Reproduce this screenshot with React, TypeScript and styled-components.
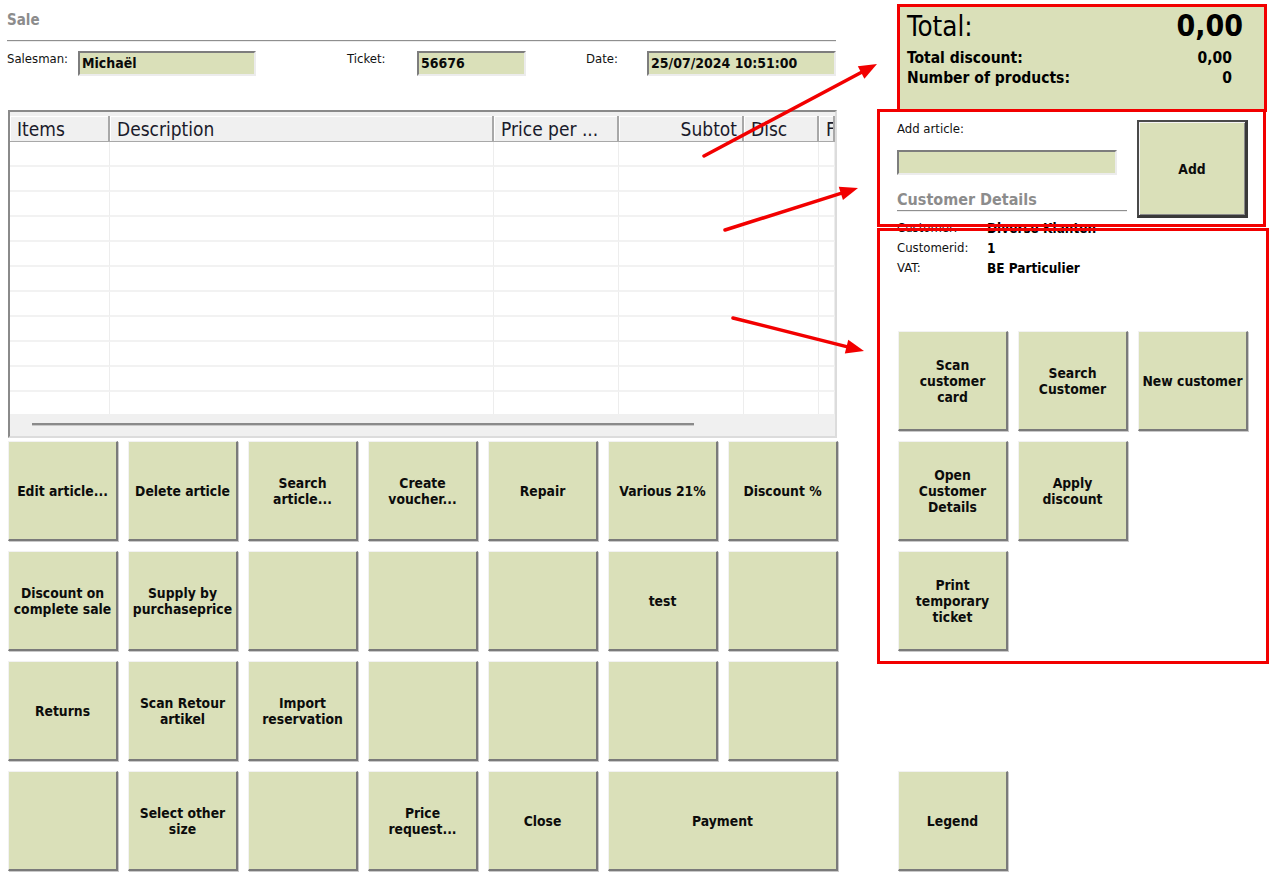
import React from "react";
import styled, { createGlobalStyle, css } from "styled-components";

const GREEN = "#dae0b9";
const FONT = `"DejaVu Sans Condensed", "DejaVu Sans", Tahoma, sans-serif`;
const RED = "#f20000";

const GlobalStyle = createGlobalStyle`
  html, body {
    margin: 0;
    padding: 0;
    background: #fff;
  }
  body {
    font-family: ${FONT};
    color: #000;
  }
`;

const Page = styled.div`
  position: relative;
  width: 1272px;
  height: 885px;
  overflow: hidden;
  display: flex;
  gap: 59px;
`;

/* ---------- left side ---------- */

const LeftColumn = styled.div`
  width: 831px;
  padding-left: 7px;
  display: flex;
  flex-direction: column;
`;

const Title = styled.div`
  padding-top: 12px;
  font-size: 15px;
  font-weight: bold;
  line-height: 17px;
  color: #8c8c8c;
`;

const Rule = styled.div<{ $width: number; $top: number }>`
  margin-top: ${(p) => p.$top}px;
  width: ${(p) => p.$width}px;
  height: 1px;
  background: #8f8f8f;
  border-bottom: 1px solid #ececec;
`;

const FieldRow = styled.div`
  margin-top: 9px;
  display: flex;
  height: 25px;
`;

const Field = styled.div<{ $offset: number }>`
  display: flex;
  margin-left: ${(p) => p.$offset}px;
`;

const FieldLabel = styled.span<{ $width: number }>`
  width: ${(p) => p.$width}px;
  font-size: 13px;
  line-height: 15px;
  color: #111;
`;

const Input = styled.div<{ $width: number }>`
  width: ${(p) => p.$width}px;
  height: 25px;
  box-sizing: border-box;
  background: ${GREEN};
  border: 2px solid;
  border-color: #7d7d7d #ececec #ececec #7d7d7d;
  font-size: 14px;
  font-weight: bold;
  line-height: 21px;
  padding-left: 2px;
  color: #0a0a0a;
`;

const COLS = "100px 384px 125px 125px 75px 16px";

const Table = styled.div`
  margin-top: 34px;
  margin-left: 1px;
  width: 829px;
  height: 328px;
  box-sizing: border-box;
  border: 2px solid;
  border-color: #8a8a8a #dcdcdc #dcdcdc #8a8a8a;
  background: #f0f0f0;
  padding-top: 4px;
  display: flex;
  flex-direction: column;
`;

const HeaderRow = styled.div`
  display: grid;
  grid-template-columns: ${COLS};
  height: 26px;
  overflow: hidden;
`;

const HeaderCell = styled.div<{ $right?: boolean }>`
  box-sizing: border-box;
  background: #f0f0f0;
  border-right: 2px solid #a8a8a8;
  border-bottom: 1px solid #a8a8a8;
  box-shadow: inset 1px 1px 0 #fff;
  font-size: 19px;
  line-height: 27px;
  padding: 0 5px 0 7px;
  text-align: ${(p) => (p.$right ? "right" : "left")};
  white-space: nowrap;
  overflow: hidden;
  color: #1a1a2a;
`;

const TableBody = styled.div`
  height: 272px;
  background: #fff;
  overflow: hidden;
`;

const BodyRow = styled.div`
  display: grid;
  grid-template-columns: ${COLS};
  height: 25px;
`;

const BodyCell = styled.div`
  border-right: 1px solid #ededed;
  border-bottom: 2px solid #f2f2f2;
`;

const ScrollTrack = styled.div`
  flex: 1;
  background: #f0f0f0;
  padding: 9px 0 0 22px;
`;

const ScrollThumb = styled.div`
  width: 662px;
  height: 2px;
  background: #8a8a8a;
  border-bottom: 1px solid #c8c8c8;
`;

const ButtonGrid = styled.div<{ $cols: number; $rows?: number }>`
  display: grid;
  grid-template-columns: repeat(${(p) => p.$cols}, 110px);
  grid-auto-rows: 100px;
  ${(p) =>
    p.$rows &&
    css`
      grid-template-rows: repeat(${p.$rows}, 100px);
    `}
  gap: 10px;
`;

const MainButtons = styled(ButtonGrid)`
  margin-top: 3px;
  margin-left: 1px;
`;

const PosButton = styled.button<{ $span?: number; $row?: number; $default?: boolean }>`
  box-sizing: border-box;
  margin: 0;
  padding: 0 2px;
  background: ${GREEN};
  border-style: solid;
  border-width: 1px 2px 2px 1px;
  border-color: #f2f2f2 #7a7a7a #7a7a7a #f2f2f2;
  box-shadow: 1px 1px 0 #c9c9c9;
  font-family: ${FONT};
  font-size: 13.8px;
  font-weight: bold;
  line-height: 16px;
  color: #0c0c0c;
  text-align: center;
  ${(p) =>
    p.$span &&
    css`
      grid-column: span ${p.$span};
    `}
  ${(p) =>
    p.$row &&
    css`
      grid-row: ${p.$row};
      grid-column: 1;
    `}
  ${(p) =>
    p.$default &&
    css`
      border-width: 2px 3px 3px 2px;
      border-color: #4a4a4a #3a3a3a #3a3a3a #4a4a4a;
      box-shadow: inset 1px 1px 0 #f4f4f4, inset -1px -1px 0 #8a8a8a;
    `}
`;

/* ---------- right side ---------- */

const RightColumn = styled.div`
  width: 372px;
  display: flex;
  flex-direction: column;
`;

const TotalPanel = styled.div`
  margin-top: 4px;
  width: 369px;
  height: 107px;
  box-sizing: border-box;
  background: ${GREEN};
  padding: 7px 0 0 10px;
`;

const TotalRow = styled.div`
  display: flex;
  justify-content: space-between;
  align-items: baseline;
  padding-right: 23px;
  height: 29px;
`;

const TotalLabel = styled.span`
  font-size: 27.5px;
  line-height: 29px;
`;

const TotalValue = styled.span`
  font-size: 30px;
  font-weight: bold;
  line-height: 29px;
`;

const SummaryRow = styled.div<{ $first?: boolean }>`
  display: flex;
  justify-content: space-between;
  padding-right: 34px;
  margin-top: ${(p) => (p.$first ? 8 : 0)}px;
  font-size: 15.5px;
  font-weight: bold;
  line-height: 20px;
`;

const AddSection = styled.div`
  margin-top: 9px;
  display: grid;
  grid-template-columns: 230px 111px;
  column-gap: 10px;
  height: 98px;
`;

const AddForm = styled.div`
  display: flex;
  flex-direction: column;
`;

const SmallLabel = styled.div`
  font-size: 13px;
  line-height: 15px;
  padding-top: 1px;
  color: #111;
`;

const AddInput = styled(Input)`
  margin-top: 14px;
`;

const SectionTitle = styled.div`
  margin-top: 15px;
  font-size: 16px;
  font-weight: bold;
  line-height: 19px;
  color: #8c8c8c;
`;

const InfoList = styled.div`
  display: flex;
  flex-direction: column;
`;

const InfoRow = styled.div`
  display: flex;
  font-size: 13px;
  line-height: 20px;
`;

const InfoLabel = styled.span`
  width: 90px;
  color: #111;
`;

const InfoValue = styled.span`
  font-weight: bold;
  font-size: 13.5px;
`;

const CustomerButtons = styled(ButtonGrid)`
  margin-top: 53px;
  margin-left: 1px;
`;

/* ---------- annotation overlay ---------- */

const Annotation = styled.div<{ $x: number; $y: number; $w: number; $h: number }>`
  position: absolute;
  left: ${(p) => p.$x}px;
  top: ${(p) => p.$y}px;
  width: ${(p) => p.$w}px;
  height: ${(p) => p.$h}px;
  box-sizing: border-box;
  border: 3px solid ${RED};
  pointer-events: none;
`;

const ArrowLayer = styled.svg`
  position: absolute;
  left: 0;
  top: 0;
  pointer-events: none;
`;

type Pt = [number, number];

const Arrow = ({ from, to }: { from: Pt; to: Pt }) => {
  const dx = to[0] - from[0];
  const dy = to[1] - from[1];
  const len = Math.hypot(dx, dy);
  const ux = dx / len;
  const uy = dy / len;
  const bx = to[0] - ux * 18;
  const by = to[1] - uy * 18;
  const head = [
    [to[0], to[1]],
    [bx - uy * 7, by + ux * 7],
    [bx + uy * 7, by - ux * 7],
  ]
    .map((p) => p.join(","))
    .join(" ");
  return (
    <g>
      <line x1={from[0]} y1={from[1]} x2={bx} y2={by} stroke={RED} strokeWidth={3.5} strokeLinecap="round" />
      <polygon points={head} fill={RED} />
    </g>
  );
};

/* ---------- data ---------- */

const mainButtons: { label: string; span?: number }[] = [
  { label: "Edit article..." },
  { label: "Delete article" },
  { label: "Search\narticle..." },
  { label: "Create\nvoucher..." },
  { label: "Repair" },
  { label: "Various 21%" },
  { label: "Discount %" },
  { label: "Discount on\ncomplete sale" },
  { label: "Supply by\npurchaseprice" },
  { label: "" },
  { label: "" },
  { label: "" },
  { label: "test" },
  { label: "" },
  { label: "Returns" },
  { label: "Scan Retour\nartikel" },
  { label: "Import\nreservation" },
  { label: "" },
  { label: "" },
  { label: "" },
  { label: "" },
  { label: "" },
  { label: "Select other\nsize" },
  { label: "" },
  { label: "Price\nrequest..." },
  { label: "Close" },
  { label: "Payment", span: 2 },
];

const customerButtons = [
  "Scan\ncustomer\ncard",
  "Search\nCustomer",
  "New customer",
  "Open\nCustomer\nDetails",
  "Apply\ndiscount",
  "",
  "Print\ntemporary\nticket",
];

const columns = [
  { title: "Items" },
  { title: "Description" },
  { title: "Price per ..." },
  { title: "Subtot", right: true },
  { title: "Disc" },
  { title: "F" },
];

const Label = ({ text }: { text: string }) => (
  <>
    {text.split("\n").map((line, i) => (
      <React.Fragment key={i}>
        {i > 0 && <br />}
        {line}
      </React.Fragment>
    ))}
  </>
);

export default function App() {
  return (
    <>
      <GlobalStyle />
      <Page>
        <LeftColumn>
          <Title>Sale</Title>
          <Rule $width={829} $top={11} />
          <FieldRow>
            <Field $offset={0}>
              <FieldLabel $width={71}>Salesman:</FieldLabel>
              <Input $width={178}>Michaël</Input>
            </Field>
            <Field $offset={91}>
              <FieldLabel $width={70}>Ticket:</FieldLabel>
              <Input $width={109}>56676</Input>
            </Field>
            <Field $offset={60}>
              <FieldLabel $width={61}>Date:</FieldLabel>
              <Input $width={189}>25/07/2024 10:51:00</Input>
            </Field>
          </FieldRow>

          <Table>
            <HeaderRow>
              {columns.map((c) => (
                <HeaderCell key={c.title} $right={c.right}>
                  {c.title}
                </HeaderCell>
              ))}
            </HeaderRow>
            <TableBody>
              {Array.from({ length: 11 }).map((_, r) => (
                <BodyRow key={r}>
                  {columns.map((c) => (
                    <BodyCell key={c.title} />
                  ))}
                </BodyRow>
              ))}
            </TableBody>
            <ScrollTrack>
              <ScrollThumb />
            </ScrollTrack>
          </Table>

          <MainButtons $cols={7}>
            {mainButtons.map((b, i) => (
              <PosButton key={i} $span={b.span}>
                <Label text={b.label} />
              </PosButton>
            ))}
          </MainButtons>
        </LeftColumn>

        <RightColumn>
          <TotalPanel>
            <TotalRow>
              <TotalLabel>Total:</TotalLabel>
              <TotalValue>0,00</TotalValue>
            </TotalRow>
            <SummaryRow $first>
              <span>Total discount:</span>
              <span>0,00</span>
            </SummaryRow>
            <SummaryRow>
              <span>Number of products:</span>
              <span>0</span>
            </SummaryRow>
          </TotalPanel>

          <AddSection>
            <AddForm>
              <SmallLabel>Add article:</SmallLabel>
              <AddInput $width={220} />
              <SectionTitle>Customer Details</SectionTitle>
              <Rule $width={230} $top={1} />
            </AddForm>
            <PosButton $default>Add</PosButton>
          </AddSection>

          <InfoList>
            <InfoRow>
              <InfoLabel>Customer:</InfoLabel>
              <InfoValue>Diverse Klanten</InfoValue>
            </InfoRow>
            <InfoRow>
              <InfoLabel>Customerid:</InfoLabel>
              <InfoValue>1</InfoValue>
            </InfoRow>
            <InfoRow>
              <InfoLabel>VAT:</InfoLabel>
              <InfoValue>BE Particulier</InfoValue>
            </InfoRow>
          </InfoList>

          <CustomerButtons $cols={3} $rows={5}>
            {customerButtons.map((label, i) =>
              label ? (
                <PosButton key={i}>
                  <Label text={label} />
                </PosButton>
              ) : (
                <span key={i} />
              )
            )}
            <PosButton $row={5}>Legend</PosButton>
          </CustomerButtons>
        </RightColumn>

        <Annotation $x={897} $y={4} $w={370} $h={108} />
        <Annotation $x={877} $y={109} $w={389} $h={118} />
        <Annotation $x={877} $y={228} $w={392} $h={436} />
        <ArrowLayer width={1272} height={885} viewBox="0 0 1272 885">
          <Arrow from={[704, 156]} to={[877, 64]} />
          <Arrow from={[725, 230]} to={[858, 188]} />
          <Arrow from={[733, 318]} to={[864, 351]} />
        </ArrowLayer>
      </Page>
    </>
  );
}
